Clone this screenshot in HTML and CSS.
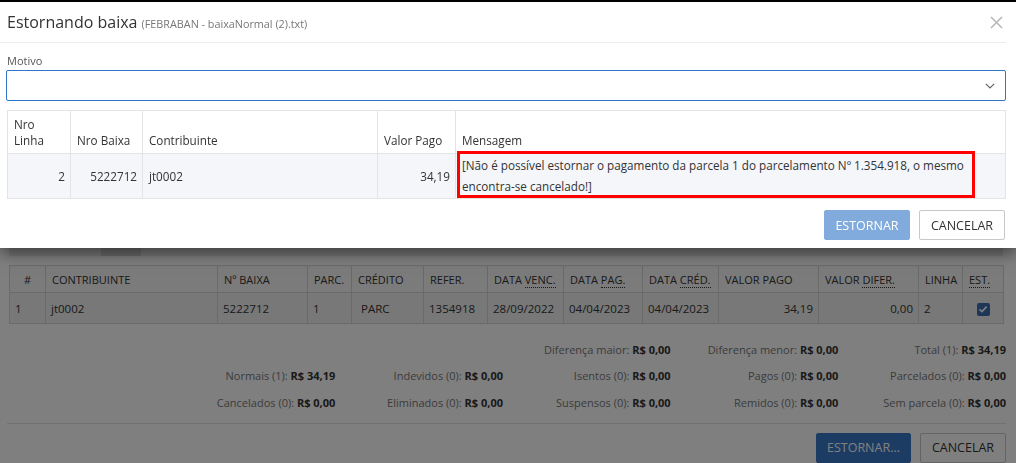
FILE: index.html
```html
<!DOCTYPE html>
<html lang="pt-BR">
<head>
<meta charset="utf-8">
<title>Estornando baixa</title>
<link rel="stylesheet" href="styles.css">
</head>
<body>
<div class="page">
  <div class="tabs"><span class="tab"></span><span class="tab tab-active"></span></div>
  <table class="grid">
    <colgroup>
      <col style="width:36px"><col style="width:172px"><col style="width:90px"><col style="width:44px"><col style="width:72px"><col style="width:64px"><col style="width:76px"><col style="width:79px"><col style="width:76px"><col style="width:100px"><col style="width:100px"><col style="width:44px"><col style="width:41px">
    </colgroup>
    <thead>
      <tr>
        <th class="center">#</th>
        <th>Contribuinte</th>
        <th>Nº Baixa</th>
        <th>Parc.</th>
        <th>Crédito</th>
        <th>Refer.</th>
        <th>Data <abbr>Venc.</abbr></th>
        <th>Data <abbr>Pag.</abbr></th>
        <th>Data <abbr>Créd.</abbr></th>
        <th>Valor Pago</th>
        <th>Valor <abbr>Difer.</abbr></th>
        <th>Linha</th>
        <th><abbr>Est.</abbr></th>
      </tr>
    </thead>
    <tbody>
      <tr>
        <td>1</td>
        <td>jt0002</td>
        <td>5222712</td>
        <td>1</td>
        <td class="pad">PARC</td>
        <td>1354918</td>
        <td>28/09/2022</td>
        <td>04/04/2023</td>
        <td>04/04/2023</td>
        <td class="right">34,19</td>
        <td class="right">0,00</td>
        <td>2</td>
        <td class="center"><span class="check"><svg width="12" height="12" viewBox="0 0 12 12"><polyline points="2.5,6.3 5,8.6 9.6,3.6" fill="none" stroke="#fff" stroke-width="1.6"/></svg></span></td>
      </tr>
    </tbody>
  </table>

  <div class="summary">
    <span></span><span></span><span></span>
    <span>Diferença maior: <b>R$ 0,00</b></span>
    <span>Diferença menor: <b>R$ 0,00</b></span>
    <span>Total (1): <b>R$ 34,19</b></span>
    <span></span>
    <span>Normais (1): <b>R$ 34,19</b></span>
    <span>Indevidos (0): <b>R$ 0,00</b></span>
    <span>Isentos (0): <b>R$ 0,00</b></span>
    <span>Pagos (0): <b>R$ 0,00</b></span>
    <span>Parcelados (0): <b>R$ 0,00</b></span>
    <span></span>
    <span>Cancelados (0): <b>R$ 0,00</b></span>
    <span>Eliminados (0): <b>R$ 0,00</b></span>
    <span>Suspensos (0): <b>R$ 0,00</b></span>
    <span>Remidos (0): <b>R$ 0,00</b></span>
    <span>Sem parcela (0): <b>R$ 0,00</b></span>
  </div>

  <div class="page-footer">
    <button class="btn btn-primary btn-wide">Estornar...</button>
    <button class="btn btn-default">Cancelar</button>
  </div>
</div>

<div class="backdrop"></div>

<div class="modal">
  <div class="modal-header">
    <h4 class="modal-title">Estornando baixa <small>(FEBRABAN - baixaNormal (2).txt)</small></h4>
    <span class="close"><svg width="13" height="13" viewBox="0 0 13 13"><path d="M1 1 L12 12 M12 1 L1 12" stroke="#b8b8b8" stroke-width="1.6" fill="none"/></svg></span>
  </div>
  <div class="modal-body">
    <label class="field-label">Motivo</label>
    <div class="select"><svg width="10" height="6" viewBox="0 0 10 6"><polyline points="0.8,0.8 5,5 9.2,0.8" fill="none" stroke="#666" stroke-width="1.2"/></svg></div>
    <table class="msg">
      <colgroup>
        <col style="width:63px"><col style="width:72px"><col style="width:235px"><col style="width:78px"><col>
      </colgroup>
      <thead>
        <tr>
          <th>Nro Linha</th>
          <th>Nro Baixa</th>
          <th>Contribuinte</th>
          <th>Valor Pago</th>
          <th>Mensagem</th>
        </tr>
      </thead>
      <tbody>
        <tr>
          <td class="right">2</td>
          <td class="right">5222712</td>
          <td>jt0002</td>
          <td class="right">34,19</td>
          <td class="message">[Não é possível estornar o pagamento da parcela 1 do parcelamento Nº 1.354.918, o mesmo encontra-se cancelado!]<span class="highlight"></span></td>
        </tr>
      </tbody>
    </table>
  </div>
  <div class="modal-footer">
    <button class="btn btn-primary btn-disabled">Estornar</button>
    <button class="btn btn-default">Cancelar</button>
  </div>
</div>
</body>
</html>
```
FILE: styles.css
```css
* { box-sizing: border-box; }
html, body { margin: 0; height: 100%; }
body {
  font-family: "Open Sans", "Noto Sans", "Liberation Sans", sans-serif;
  font-size: 12px;
  color: #333;
  background: #fff;
  overflow: hidden;
}

/* ---------- background page ---------- */
.page { padding: 0 10px 0 9px; }
.tabs {
  margin-top: 226px;
  height: 30px;
  margin-right: 3px;
  display: flex;
  background: #ececec;
}
.tab { width: 92px; }
.tab-active { width: 40px; background: #d2d2d2; }

.grid {
  margin-top: 9px;
  width: 994px;
  table-layout: fixed;
  border-collapse: collapse;
  font-size: 11.5px;
}
.grid th, .grid td {
  border: 1px solid #d4d4d4;
  padding: 0 6px;
  white-space: nowrap;
  overflow: hidden;
  text-align: left;
}
.grid th {
  height: 27px;
  font-size: 11px;
  font-weight: normal;
  text-transform: uppercase;
  background: #f6f6f6;
  color: #333;
}
.grid td { height: 31px; background: #f1f1f1; padding: 0 5px; }
.grid .center { text-align: center; }
.grid .right { text-align: right; }
.grid .pad { padding-left: 9px; }
abbr {
  text-decoration: none;
  border-bottom: 1px dotted #333;
}
.check {
  display: inline-block;
  width: 13px;
  height: 13px;
  background: #3d6fb3;
  border-radius: 2px;
  vertical-align: middle;
}
.check svg { display: block; margin: 0.5px; }

.summary {
  margin: 12px 0 0 -9px;
  display: grid;
  grid-template-columns: repeat(6, 1fr);
  grid-auto-rows: 26.5px;
  align-items: center;
  text-align: right;
  color: #777;
  font-size: 11px;
}
.summary b { color: #333; font-weight: 700; }

.page-footer {
  margin: 7px 0 0 -2px;
  border-top: 1px solid #e5e5e5;
  padding-top: 9px;
  display: flex;
  justify-content: flex-end;
  gap: 9px;
}

.btn {
  height: 30px;
  width: 86px;
  padding: 0;
  border: 1px solid transparent;
  border-radius: 2px;
  font-family: inherit;
  font-size: 12.5px;
  text-transform: uppercase;
  cursor: pointer;
}
.btn-wide { width: 95px; }
.btn-primary { background: #3a79c7; color: #fff; border-color: #3a79c7; }
.btn-disabled { background: #80abdc; border-color: #80abdc; }
.btn-default { background: #fff; color: #333; border-color: #c8c8c8; }

.backdrop {
  position: fixed;
  inset: 0;
  background: rgba(0, 0, 0, 0.5);
}

/* ---------- modal ---------- */
.modal {
  position: absolute;
  top: 0;
  left: 0;
  right: 0;
  background: #fff;
  border-top: 2px solid #000;
  padding-right: 10px;
  box-shadow: 0 5px 15px rgba(0, 0, 0, 0.5);
}
.modal-header {
  height: 41px;
  border-bottom: 1px solid #ececec;
  padding-left: 7px;
  display: flex;
  align-items: center;
  justify-content: space-between;
}
.modal-title {
  margin: 0;
  font-size: 16px;
  font-weight: 400;
  color: #333;
}
.modal-title small {
  font-size: 10.8px;
  color: #777;
}
.close { display: block; margin-right: 3px; height: 13px; }
.close svg { display: block; }

.modal-body { padding: 10px 0 0 6px; }
.field-label {
  display: block;
  height: 17px;
  line-height: 16px;
  padding-left: 1px;
  font-size: 11px;
  color: #555;
}
.select {
  height: 31px;
  border: 1px solid #2f76c9;
  border-radius: 2px;
  display: flex;
  align-items: center;
  justify-content: flex-end;
  padding-right: 10px;
}
.select svg { display: block; }

.msg {
  margin: 9px 0 0 1px;
  width: 999px;
  table-layout: fixed;
  border-collapse: collapse;
  font-size: 11.7px;
}
.msg th, .msg td {
  border: 1px solid #e4e4e4;
  text-align: left;
}
.msg th {
  height: 43px;
  font-weight: normal;
  vertical-align: bottom;
  line-height: 16px;
  padding: 0 6px 5px;
}
.msg td {
  height: 45px;
  background: #f5f6fa;
  line-height: 21px;
  padding: 1px 6px 1px 6px;
}
.msg .right { text-align: right; padding-right: 5px; }
.msg .message { position: relative; }
.highlight {
  position: absolute;
  left: 1px;
  top: -3px;
  width: 518px;
  height: 47px;
  border: 3px solid #f00;
}

.modal-footer {
  padding: 11px 0 8px;
  display: flex;
  justify-content: flex-end;
  gap: 9px;
}
.modal-footer .btn-default { margin-right: 1px; }
```
